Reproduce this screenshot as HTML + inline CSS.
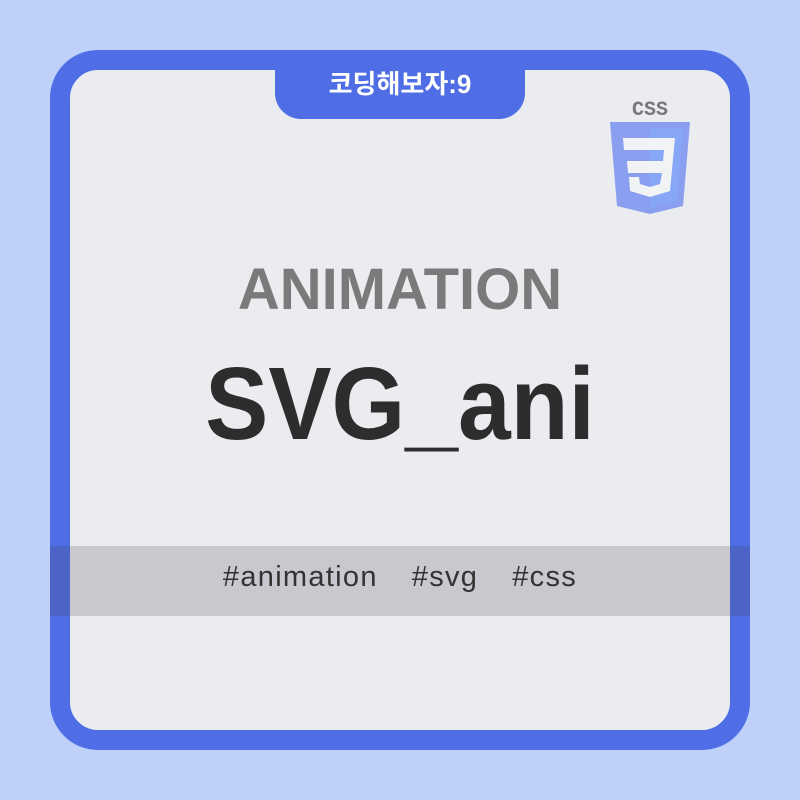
<!DOCTYPE html>
<html><head><style>
body{margin:0;width:800px;height:800px;background:#bfd0fa;position:relative;overflow:hidden;font-family:"Liberation Sans","Noto Sans CJK KR",sans-serif}
.box{position:absolute;left:50px;top:50px;width:660px;height:660px;border:20px solid #4f6ee6;border-radius:48px;background:#ebecf0;}
.band{position:absolute;left:50px;top:546px;width:700px;height:70px;background:rgba(60,60,70,0.2);}
.badge{position:absolute;left:275px;top:60px;width:250px;height:59px;background:#4f6ee6;border-radius:0 0 26px 26px;color:#fff;font-weight:bold;font-size:26px;text-align:center;line-height:48px}
.t1{position:absolute;left:0;width:800px;top:256px;text-align:center;font-weight:bold;font-size:58px;color:#7a7a7a;transform:scaleX(1.0)}
.t2{position:absolute;left:0;width:800px;top:345px;text-align:center;font-weight:bold;font-size:103px;color:#2d2d2d;transform:scaleX(0.92)}
.tags{position:absolute;left:0;width:800px;top:561px;text-align:center;font-size:29px;color:#333;letter-spacing:1.3px;white-space:nowrap}
.tags span{margin:0 17px}
</style></head><body>
<div class="box"></div>
<div class="band"></div>
<div class="badge">코딩해보자:9</div>
<svg style="position:absolute;left:606px;top:96px" width="90" height="120" viewBox="0 0 90 120">
<text x="44" y="19" text-anchor="middle" font-family="Liberation Mono" font-weight="bold" font-size="20" fill="#777">CSS</text>
<path d="M4 26 L84 26 L77 110 L44 118 L11 110 Z" fill="#8a9ff0"/>
<path d="M44 33 L77 33 L71 104 L44 112 Z" fill="#88a6f6"/>
<path d="M17 42 L69 42 L64 95 L44 101 L24 95 L23 81 L33 81 L34 88 L44 91 L54 88 L56 77 L22 77 L21 65 L57 65 L58 54 L18 54 Z" fill="#f2f3f5"/>
</svg>
<div class="t1">ANIMATION</div>
<div class="t2">SVG_ani</div>
<div class="tags"><span>#animation</span><span>#svg</span><span>#css</span></div>
</body></html>
